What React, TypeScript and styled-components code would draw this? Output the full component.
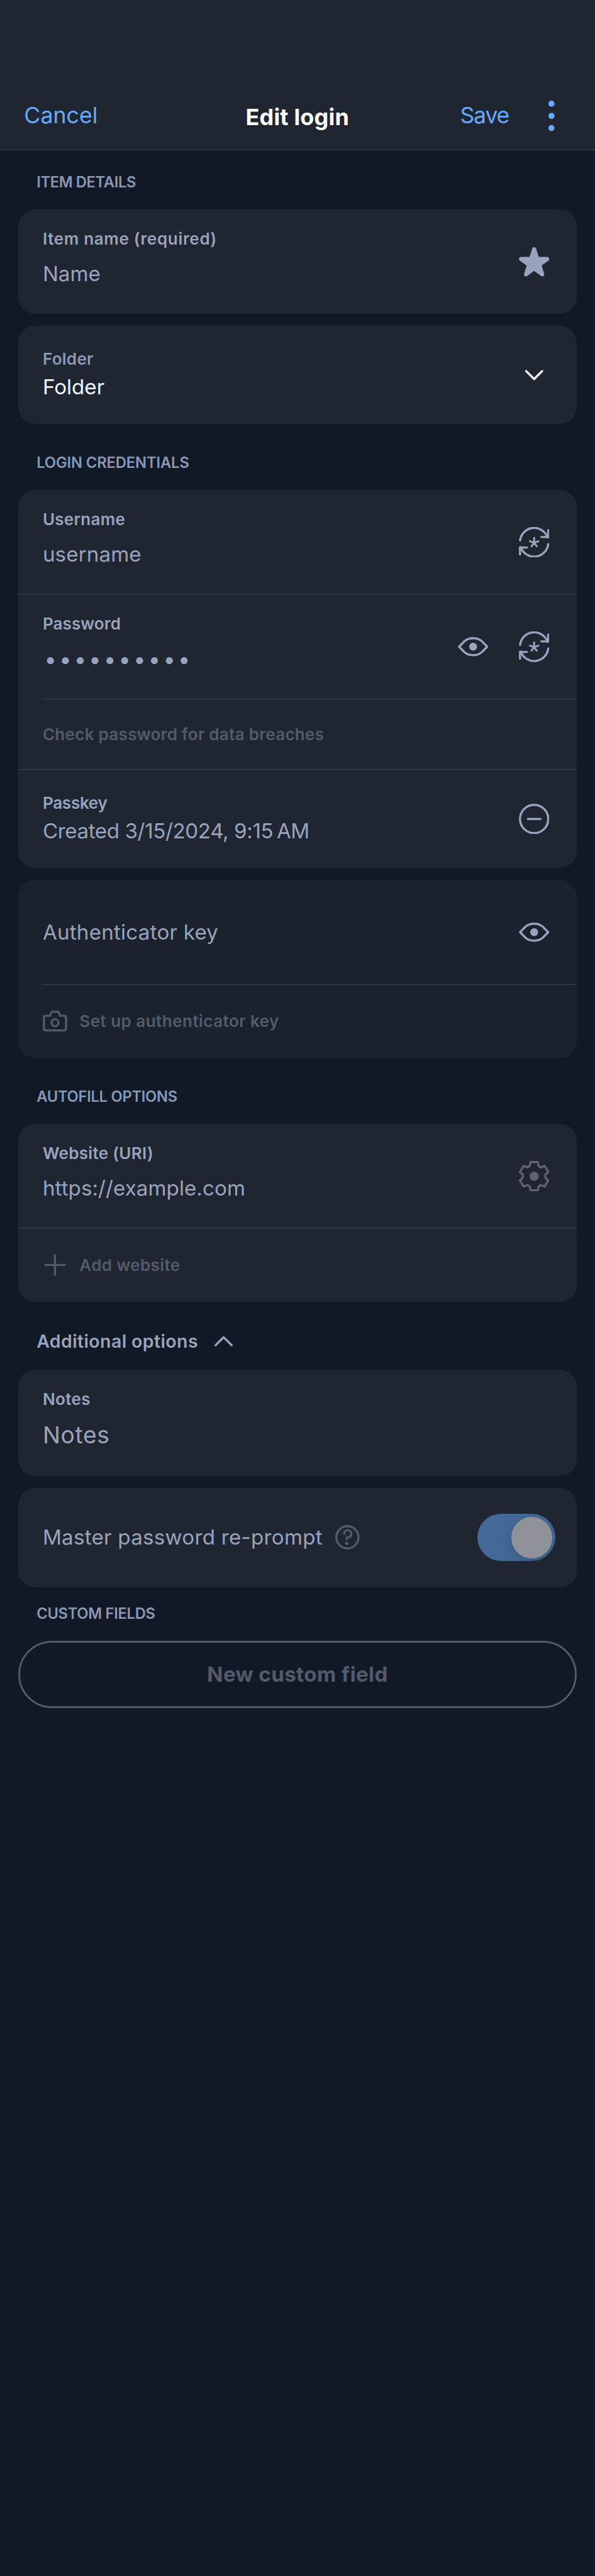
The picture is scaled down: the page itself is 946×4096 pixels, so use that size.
import React from "react";
import styled, { createGlobalStyle } from "styled-components";

// The screen is designed on a 390pt wide grid and shown 946px wide.
const pt = (n: number) => `${((n * 946) / 390).toFixed(3)}px`;

const color = {
  background: "#121926",
  surface: "#202631",
  surfaceDisabled: "#1b212d",
  divider: "#3d414c",
  accent: "#65abff",
  title: "#ffffff",
  primary: "#f3f6f9",
  secondary: "#8898b5",
  muted: "#99a3bd",
  disabled: "#525b69",
  gear: "#5f636e",
  toggle: "#446998",
  knob: "#909299",
};

const GlobalStyle = createGlobalStyle`
  html, body { margin: 0; padding: 0; background: ${color.background}; }
  *, *::before, *::after { box-sizing: border-box; }
  button { appearance: none; border: 0; margin: 0; padding: 0; background: none; font: inherit; color: inherit; }
`;

const Screen = styled.div`
  width: 946px;
  height: 4096px;
  overflow: hidden;
  background: ${color.background};
  font-family: Inter, "Open Sans", sans-serif;
  -webkit-font-smoothing: antialiased;
`;

const Header = styled.header`
  height: ${pt(98.4)};
  padding: ${pt(54.1)} ${pt(26.4)} 0 ${pt(15.8)};
  background: ${color.surface};
  border-bottom: 1px solid ${color.divider};
  display: flex;
  align-items: flex-start;
  justify-content: space-between;
`;

const HeaderSide = styled.div<{ $end?: boolean }>`
  height: ${pt(44)};
  width: ${pt(120)};
  display: flex;
  align-items: center;
  justify-content: ${(p) => (p.$end ? "flex-end" : "flex-start")};
  gap: ${pt(26)};
`;

const HeaderButton = styled.button<{ $track: number }>`
  color: ${color.accent};
  font-size: ${pt(14.67)};
  line-height: ${pt(20)};
  letter-spacing: ${(p) => p.$track}em;
`;

const Title = styled.h1`
  margin: 0 0 0 ${pt(10.4)};
  padding-top: ${pt(1.5)};
  height: ${pt(44)};
  display: flex;
  align-items: center;
  color: ${color.title};
  font-size: ${pt(14.83)};
  font-weight: 700;
  line-height: ${pt(20)};
  letter-spacing: 0.005em;
`;

const Content = styled.main`
  padding: 0 ${pt(12)};
`;

const SectionTitle = styled.h2<{ $top: number; $track: number }>`
  margin: 0;
  padding: ${(p) => pt(p.$top)} ${pt(12)} ${pt(11.35)};
  color: ${color.secondary};
  font-size: ${pt(9.77)};
  font-weight: 600;
  line-height: ${pt(13)};
  letter-spacing: ${(p) => p.$track}em;
`;

const Card = styled.section<{ $disabled?: boolean }>`
  background: ${(p) => (p.$disabled ? color.surfaceDisabled : color.surface)};
  border-radius: ${pt(11)};
  overflow: hidden;

  & + & {
    margin-top: ${pt(8)};
  }
`;

const Row = styled.div<{ $height: number; $divider?: "full" | "inset" }>`
  position: relative;
  height: ${(p) => pt(p.$height)};
  padding: 0 ${pt(18)} 0 ${pt(16)};
  display: flex;
  align-items: center;

  &::after {
    content: "";
    display: ${(p) => (p.$divider ? "block" : "none")};
    position: absolute;
    left: ${(p) => (p.$divider === "inset" ? pt(16) : 0)};
    right: 0;
    bottom: 0;
    height: 1px;
    background: ${color.divider};
  }
`;

const Field = styled.div<{ $top?: number; $gap?: number }>`
  flex: 1;
  height: 100%;
  display: flex;
  flex-direction: column;
  padding-top: ${(p) => pt(p.$top ?? 12.25)};
  gap: ${(p) => pt(p.$gap ?? 7.1)};
`;

const Label = styled.span<{ $track: number; $secondary?: boolean }>`
  color: ${(p) => (p.$secondary ? color.secondary : color.muted)};
  font-size: ${pt(10.73)};
  font-weight: 600;
  line-height: ${pt(14)};
  letter-spacing: ${(p) => p.$track}em;
  white-space: nowrap;
`;

const Value = styled.span<{ $track?: number; $primary?: boolean }>`
  color: ${(p) => (p.$primary ? color.primary : color.muted)};
  font-size: ${pt(13.67)};
  line-height: ${pt(18)};
  letter-spacing: ${(p) => p.$track ?? 0}em;
  white-space: nowrap;
`;

const MaskedValue = styled(Value)`
  padding-left: ${pt(1)};
  font-size: ${pt(14.58)};
  letter-spacing: 0.105em;
`;

const NotesValue = styled(Value)`
  font-size: ${pt(15.3)};
  line-height: ${pt(20)};
`;

const Actions = styled.div`
  display: flex;
  align-items: center;
  gap: ${pt(20)};
  margin-left: auto;
`;

const LinkButton = styled.button<{ $track: number }>`
  display: flex;
  align-items: center;
  gap: ${pt(8.1)};
  color: ${color.disabled};
  font-size: ${pt(10.73)};
  font-weight: 600;
  line-height: ${pt(14)};
  letter-spacing: ${(p) => p.$track}em;
  white-space: nowrap;
`;

const Expander = styled.button`
  display: flex;
  align-items: center;
  gap: ${pt(10.6)};
  height: ${pt(44.72)};
  padding: ${pt(7.3)} ${pt(12)} 0;
  color: ${color.muted};
  font-size: ${pt(11.73)};
  font-weight: 600;
  line-height: ${pt(16)};
  letter-spacing: 0.0147em;
`;

const PromptLabel = styled.div`
  display: flex;
  align-items: center;
  gap: ${pt(8.4)};
`;

const Toggle = styled.span`
  width: ${pt(51)};
  height: ${pt(31)};
  margin-right: ${pt(-4)};
  padding: ${pt(2)};
  border-radius: ${pt(15.5)};
  background: ${color.toggle};
  display: flex;
  justify-content: flex-end;
  overflow: hidden;
`;

const Knob = styled.span`
  width: ${pt(27)};
  height: ${pt(27)};
  border-radius: 50%;
  background: ${color.knob};
  box-shadow: 0 ${pt(3)} ${pt(8)} rgba(0, 0, 0, 0.15);
`;

const OutlineButton = styled.button`
  display: flex;
  align-items: center;
  justify-content: center;
  width: 100%;
  height: ${pt(44)};
  border: ${pt(1.6)} solid ${color.disabled};
  border-radius: ${pt(22)};
  color: ${color.disabled};
  font-size: ${pt(13.67)};
  font-weight: 700;
  line-height: ${pt(18)};
  letter-spacing: 0.0111em;
`;

const Svg = styled.svg<{ $w: number; $h: number; $tint: string }>`
  display: block;
  flex: none;
  width: ${(p) => pt(p.$w)};
  height: ${(p) => pt(p.$h)};
  color: ${(p) => p.$tint};
  fill: none;
  stroke: currentColor;
  stroke-width: 4.2;
  stroke-linecap: round;
`;

const MoreIcon = () => (
  <Svg viewBox="0 0 12 60" $w={4} $h={20} $tint={color.accent}>
    <g fill="currentColor" stroke="none">
      <circle cx="6" cy="6" r="6" />
      <circle cx="6" cy="30" r="6" />
      <circle cx="6" cy="54" r="6" />
    </g>
  </Svg>
);

const StarIcon = () => (
  <Svg viewBox="0 0 60 58" $w={20} $h={19.33} $tint={color.muted}>
    <path
      fill="currentColor"
      stroke="none"
      d="M26.2 2.8A4 4 0 0 1 33.8 2.8L39 19.3H56A4 4 0 0 1 58.4 26.4L44.7 36.3L49.8 52.6A4 4 0 0 1 43.8 57L30 46.7L16.2 57A4 4 0 0 1 10.2 52.6L15.3 36.3L1.6 26.4A4 4 0 0 1 4 19.3H21Z"
    />
  </Svg>
);

const ChevronDownIcon = () => (
  <Svg viewBox="0 0 60 60" $w={20} $h={20} $tint={color.primary}>
    <path strokeLinejoin="round" d="M14.2 22.2L30 38L45.8 22.2" />
  </Svg>
);

const ChevronUpIcon = () => (
  <Svg viewBox="0 0 36 21" $w={12} $h={7} $tint={color.muted}>
    <path strokeLinejoin="round" d="M2.2 18.5L18 2.7L33.8 18.5" />
  </Svg>
);

const GenerateIcon = () => (
  <Svg viewBox="0 0 60 60" $w={20} $h={20} $tint={color.muted}>
    <path d="M2.3 26.3A27.9 27.9 0 0 1 56.3 20.3" />
    <path d="M57.8 6.2V19.7H44.2" />
    <path d="M57.7 33.7A27.9 27.9 0 0 1 3.7 39.7" />
    <path d="M2.2 53.8V40.3H15.8" />
    <path
      strokeWidth="3.8"
      d="M30 31V21.4M30 31L21.6 28M30 31L38.4 28M30 31L24.9 37.8M30 31L35.1 37.8"
    />
  </Svg>
);

const EyeIcon = () => (
  <Svg viewBox="0 0 60 60" $w={20} $h={20} $tint={color.muted}>
    <path
      strokeLinejoin="round"
      d="M2.3 30L13 19.2C18.6 14.4 24 13.3 30 13.3S41.4 14.4 47 19.2L57.7 30L47 40.8C41.4 45.6 36 46.7 30 46.7S18.6 45.6 13 40.8Z"
    />
    <circle cx="30" cy="30" r="7.7" fill="currentColor" stroke="none" />
  </Svg>
);

const RemoveIcon = () => (
  <Svg viewBox="0 0 60 60" $w={20} $h={20} $tint={color.muted}>
    <circle cx="30" cy="30" r="27.8" />
    <path d="M17.7 30H42.3" />
  </Svg>
);

const CameraIcon = () => (
  <Svg viewBox="0 0 48 41" $w={16} $h={13.67} $tint={color.disabled}>
    <path d="M14 10L16.2 4.8Q17.4 2.2 20 2.2H28Q30.8 2.2 31.9 4.8L34 10H42Q45.8 10 45.8 13.8V35Q45.8 38.8 42 38.8H6Q2.2 38.8 2.2 35V13.8Q2.2 10 6 10Z" />
    <circle cx="24" cy="23.7" r="6.8" />
  </Svg>
);

const GearIcon = () => (
  <Svg viewBox="0 0 60 60" $w={20} $h={20} $tint={color.gear}>
    <path
      strokeLinejoin="round"
      d="M22.8 2.2H37.2L38.7 9.8L43.3 12.6L50.7 9.8L58 21.8L52.2 26.6V33.4L58 38.2L50.7 50.2L43.3 47.4L38.7 50.2L37.2 57.8H22.8L21.3 50.2L16.7 47.4L9.3 50.2L2 38.2L7.8 33.4V26.6L2 21.8L9.3 9.8L16.7 12.6L21.3 9.8Z"
    />
    <circle cx="30" cy="30" r="9" fill="currentColor" stroke="none" />
  </Svg>
);

const PlusIcon = () => (
  <Svg viewBox="0 0 48 48" $w={16} $h={16} $tint={color.disabled}>
    <path d="M24 4.8V43.2M4.8 24H43.2" />
  </Svg>
);

const HelpIcon = () => (
  <Svg viewBox="0 0 48 48" $w={16} $h={16} $tint={color.disabled}>
    <circle cx="24" cy="24" r="21.8" />
    <path d="M17.6 17.4A7.1 7.1 0 1 1 24.8 24.2Q22.6 24.4 22.6 26.6V27.8" />
    <circle cx="22.8" cy="36" r="3.2" fill="currentColor" stroke="none" />
  </Svg>
);

export default function App() {
  return (
    <Screen>
      <GlobalStyle />
      <Header>
        <HeaderSide>
          <HeaderButton $track={0.0026}>Cancel</HeaderButton>
        </HeaderSide>
        <Title>Edit login</Title>
        <HeaderSide $end>
          <HeaderButton $track={-0.0315}>Save</HeaderButton>
          <MoreIcon />
        </HeaderSide>
      </Header>

      <Content>
        <SectionTitle $top={14.65} $track={-0.0145}>ITEM DETAILS</SectionTitle>
        <Card>
          <Row $height={68.3}>
            <Field>
              <Label $track={0.0259}>Item name (required)</Label>
              <Value>Name</Value>
            </Field>
            <Actions><StarIcon /></Actions>
          </Row>
        </Card>
        <Card>
          <Row $height={64.05}>
            <Field $top={14.8} $gap={2.4}>
              <Label $track={0.011} $secondary>Folder</Label>
              <Value $primary>Folder</Value>
            </Field>
            <Actions><ChevronDownIcon /></Actions>
          </Row>
        </Card>

        <SectionTitle $top={19.1} $track={-0.0039}>LOGIN CREDENTIALS</SectionTitle>
        <Card>
          <Row $height={68.5} $divider="full">
            <Field>
              <Label $track={0.0104}>Username</Label>
              <Value $track={0.0034}>username</Value>
            </Field>
            <Actions><GenerateIcon /></Actions>
          </Row>
          <Row $height={68.7} $divider="inset">
            <Field $gap={7.4}>
              <Label $track={0.0035}>Password</Label>
              <MaskedValue>••••••••••</MaskedValue>
            </Field>
            <Actions>
              <EyeIcon />
              <GenerateIcon />
            </Actions>
          </Row>
          <Row $height={46.3} $divider="full">
            <LinkButton $track={0.0109}>Check password for data breaches</LinkButton>
          </Row>
          <Row $height={64.2}>
            <Field $top={14.8} $gap={2.4}>
              <Label $track={-0.0102}>Passkey</Label>
              <Value $track={-0.012}>Created 3/15/2024, 9:15{"\u202f"}AM</Value>
            </Field>
            <Actions><RemoveIcon /></Actions>
          </Row>
        </Card>

        <Card $disabled>
          <Row $height={68.6} $divider="inset">
            <Value $track={0.0068}>Authenticator key</Value>
            <Actions><EyeIcon /></Actions>
          </Row>
          <Row $height={47.8}>
            <LinkButton $track={0.0176}>
              <CameraIcon />
              Set up authenticator key
            </LinkButton>
          </Row>
        </Card>

        <SectionTitle $top={19.1} $track={-0.0107}>AUTOFILL OPTIONS</SectionTitle>
        <Card>
          <Row $height={68.6} $divider="full">
            <Field>
              <Label $track={0.0123}>Website (URI)</Label>
              <Value $track={0.0017}>https://example.com</Value>
            </Field>
            <Actions><GearIcon /></Actions>
          </Row>
          <Row $height={48.05}>
            <LinkButton $track={0.0146}>
              <PlusIcon />
              Add website
            </LinkButton>
          </Row>
        </Card>

        <Expander>
          Additional options
          <ChevronUpIcon />
        </Expander>
        <Card>
          <Row $height={69.35}>
            <Field $gap={6.6}>
              <Label $track={0.0146}>Notes</Label>
              <NotesValue $track={0.018}>Notes</NotesValue>
            </Field>
          </Row>
        </Card>
        <Card>
          <Row $height={65.05}>
            <PromptLabel>
              <Value $track={0.0077}>Master password re-prompt</Value>
              <HelpIcon />
            </PromptLabel>
            <Actions><Toggle><Knob /></Toggle></Actions>
          </Row>
        </Card>

        <SectionTitle $top={11} $track={-0.0112}>CUSTOM FIELDS</SectionTitle>
        <OutlineButton>New custom field</OutlineButton>
      </Content>
    </Screen>
  );
}
